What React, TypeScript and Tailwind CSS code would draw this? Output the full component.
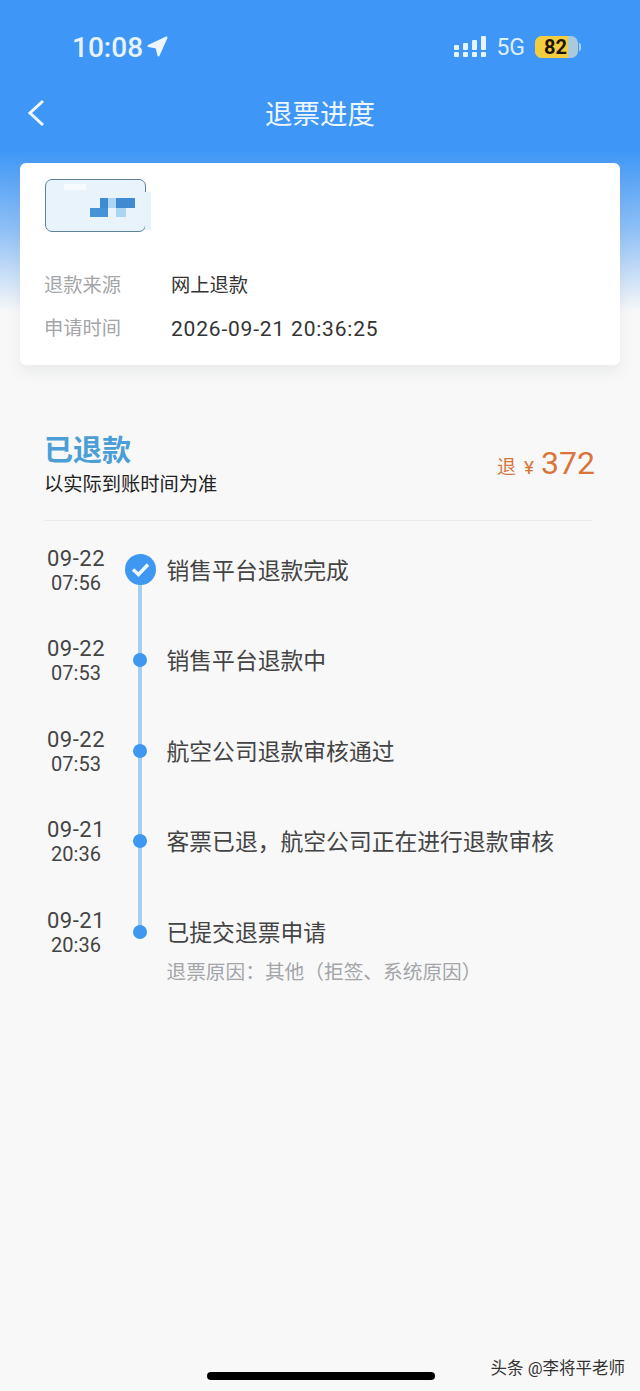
const steps = [
  { date: "09-22", time: "07:56", label: "销售平台退款完成", done: true },
  { date: "09-22", time: "07:53", label: "销售平台退款中" },
  { date: "09-22", time: "07:53", label: "航空公司退款审核通过" },
  { date: "09-21", time: "20:36", label: "客票已退\uFF0C航空公司正在进行退款审核" },
  { date: "09-21", time: "20:36", label: "已提交退票申请", note: "退票原因\uFF1A其他\uFF08拒签、系统原因\uFF09" },
];

const StatusBar: React.FC = () => {
  return (
    <div className="flex h-[94px] items-center justify-between pl-[72px] pr-[59px] text-white">
      <div className="flex items-center gap-[4px]">
        <span className="mt-[2px] text-[28px] font-medium leading-none text-[#e8f3fe]">10:08</span>
        <svg width="21" height="21" viewBox="0 0 21 21" className="mt-[-1px]">
          <path d="M19.5 1.5 L1.5 10 L9.5 11.5 L11.5 19.5 Z" fill="#eef6ff" stroke="#eef6ff" strokeWidth="2" strokeLinejoin="round" />
        </svg>
      </div>
      <div className="flex items-center">
        <svg width="33" height="22" viewBox="0 0 33 22" fill="#e6f4ff">
          <rect x="0" y="9" width="5" height="5" rx="1" />
          <rect x="0" y="16" width="5" height="5" rx="1" />
          <rect x="9" y="7" width="5" height="7" rx="1" />
          <rect x="9" y="16" width="5" height="5" rx="1" />
          <rect x="18" y="4" width="5" height="10" rx="1" />
          <rect x="18" y="16" width="5" height="5" rx="1" />
          <rect x="27" y="0" width="5" height="14" rx="1" />
          <rect x="27" y="16" width="5" height="5" rx="1" />
        </svg>
        <span className="ml-[9px] text-[23px] leading-none text-[#dceeff]">5G</span>
        <div className="relative ml-[10px] h-[22px] w-[43px] overflow-hidden rounded-[7px] bg-[#a9c9dc]">
          <div className="h-full w-[33px] bg-[#f3cc3f]" />
          <span className="absolute inset-0 flex items-center justify-center pr-[2px] text-[20px] font-bold leading-none text-[#1c1408]">82</span>
        </div>
        <div className="ml-[1px] h-[8px] w-[2px] rounded-r-full bg-[#a9d2f5]" />
      </div>
    </div>
  );
};

const RefundCard: React.FC = () => {
  return (
    <section className="mx-[20px] h-[202px] rounded-[6px] bg-white px-[24px] pt-[16px] shadow-[0_6px_14px_rgba(120,130,150,0.12)]">
      <div className="relative ml-[1px] h-[53px] w-[101px] rounded-[7px] border border-[#5b8296] bg-[#e9f3fb]">
        <div className="absolute left-[99px] top-[12px] h-[38px] w-[6px] bg-[#e6f3f8]" />
        <div className="absolute left-[18px] top-[4px] h-[6px] w-[22px] bg-[#f8fbfe]" />
        <svg width="46" height="20" viewBox="0 0 46 20" className="absolute left-[44px] top-[18px]">
          <rect x="0" y="10" width="18" height="9" fill="#4593d6" />
          <rect x="10" y="0" width="8" height="10" fill="#3f8ad0" />
          <rect x="18" y="0" width="8" height="10" fill="#a9d4f3" />
          <rect x="26" y="0" width="19" height="10" fill="#3f8ad0" />
          <rect x="26" y="10" width="10" height="9" fill="#a9d4f3" />
        </svg>
      </div>
      <dl className="mt-[41px] flex flex-col gap-[17px] text-[19.25px] leading-[26px]">
        <div className="flex">
          <dt className="w-[127px] text-[#a3a5a8]">退款来源</dt>
          <dd className="text-[#333]">网上退款</dd>
        </div>
        <div className="flex">
          <dt className="w-[127px] text-[#a3a5a8]">申请时间</dt>
          <dd className="text-[21px] tracking-[0.8px] text-[#333]">2026-09-21 20:36:25</dd>
        </div>
      </dl>
    </section>
  );
};

const Timeline: React.FC = () => {
  return (
    <ol className="mt-[26px] flex flex-col pl-[45px]">
      {steps.map((step, i) => (
        <li key={i} className="flex h-[90.4px] items-start">
          <div className="w-[62px] text-center text-[#444] leading-[24px]">
            <div className="text-[22px] tracking-[0.5px]">{step.date}</div>
            <div className="text-[20px]">{step.time}</div>
          </div>
          <div className="relative ml-[17px] mt-[-2px] flex h-[50px] w-[32px] items-center justify-center">
            {i < steps.length - 1 && <div className="absolute left-[14px] top-[25px] h-[91px] w-[4px] bg-[#a6d0ee]" />}
            {step.done ? (
              <div className="relative mt-[-1px] flex h-[31px] w-[31px] items-center justify-center rounded-full bg-[#3e97f0]">
                <svg width="19" height="15" viewBox="0 0 19 15">
                  <path d="M2 7.5 L7.5 12.5 L17 2.5" fill="none" stroke="#eef6ff" strokeWidth="3.5" />
                </svg>
              </div>
            ) : (
              <div className="relative h-[14px] w-[14px] rounded-full bg-[#3e97f0]" />
            )}
          </div>
          <div className="ml-[10.5px]">
            <div className="text-[22.8px] leading-[50px] text-[#444]">{step.label}</div>
            {step.note && <div className="mt-[1px] text-[19.7px] leading-[26px] text-[#a3a5a8]">{step.note}</div>}
          </div>
        </li>
      ))}
    </ol>
  );
};

export default function App() {
  return (
    <div
      className="relative flex h-[1391px] w-[640px] flex-col overflow-hidden bg-[linear-gradient(to_bottom,#3e97f7_0px,#3e97f7_150px,#8fc0f6_230px,#f8f8f8_312px)] font-['Roboto','Noto_Sans_CJK_SC',sans-serif]"
    >
      <StatusBar />
      <header className="relative flex h-[69px] items-start justify-center pt-[4px]">
        <svg width="18" height="28" viewBox="0 0 18 28" className="absolute left-[27px] top-[5px]">
          <path d="M16 2 L3 14 L16 26" fill="none" stroke="#f0f7ff" strokeWidth="3" />
        </svg>
        <h1 className="text-[27.5px] leading-[34px] text-[#eef6ff]">退票进度</h1>
      </header>
      <RefundCard />

      <section className="ml-[44px] mr-[48px] mt-[67px] border-b border-[#e9eaeb] pb-[22px]">
        <div className="flex items-center justify-between">
          <div>
            <div className="pt-[1px] text-[29px] font-bold leading-[36px] text-[#4b9ed6]">已退款</div>
            <div className="pt-[3px] text-[19.25px] leading-[26px] text-[#222]">以实际到账时间为准</div>
          </div>
          <div className="mr-[-3px] flex items-baseline text-[#d9743a]">
            <span className="text-[19px]">退</span>
            <span className="ml-[8px] text-[19px]">¥</span>
            <span className="ml-[7px] text-[32px] leading-none">372</span>
          </div>
        </div>
      </section>

      <Timeline />

      <div className="absolute bottom-[11px] left-[207px] h-[8px] w-[228px] rounded-full bg-black" />
      <span className="absolute bottom-[12px] right-[15px] text-[16.5px] leading-[20px] text-[#333]">头条 @李将平老师</span>
    </div>
  );
}
